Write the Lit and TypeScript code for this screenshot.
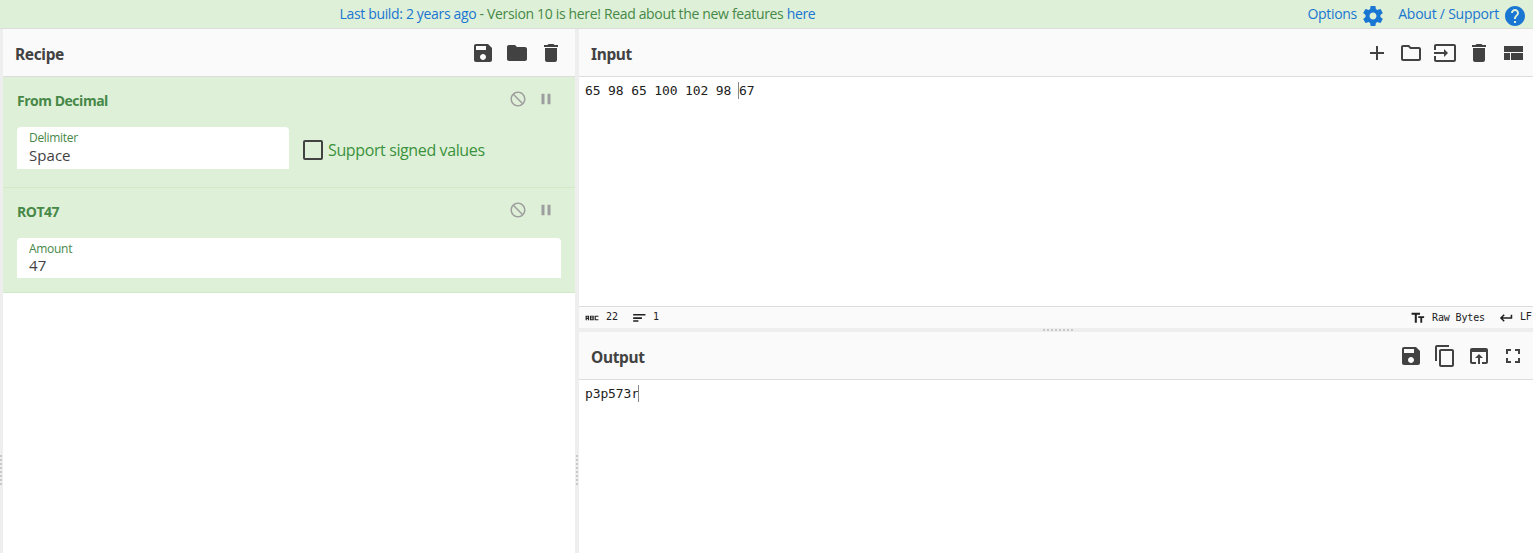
import { LitElement, html, css, svg } from "lit";
import { customElement, property } from "lit/decorators.js";

const ICONS: Record<string, string> = {
  save: "M17 3H5c-1.11 0-2 .9-2 2v14c0 1.1.89 2 2 2h14c1.1 0 2-.9 2-2V7l-4-4zm-5 16c-1.66 0-3-1.34-3-3s1.34-3 3-3 3 1.34 3 3-1.34 3-3 3zm3-10H5V5h10v4z",
  folder: "M10 4H4c-1.1 0-1.99.9-1.99 2L2 18c0 1.1.9 2 2 2h16c1.1 0 2-.9 2-2V8c0-1.1-.9-2-2-2h-8l-2-2z",
  trash: "M6 19c0 1.1.9 2 2 2h8c1.1 0 2-.9 2-2V7H6v12zM19 4h-3.5l-1-1h-5l-1 1H5v2h14V4z",
  add: "M19 13h-6v6h-2v-6H5v-2h6V5h2v6h6v2z",
  folderOpen: "M9.17 6l2 2H20v10H4V6h5.17M10 4H4c-1.1 0-1.99.9-1.99 2L2 18c0 1.1.9 2 2 2h16c1.1 0 2-.9 2-2V8c0-1.1-.9-2-2-2h-8l-2-2z",
  input: "M21 3.01H3c-1.1 0-2 .9-2 2V9h2V4.99h18v14.03H3V15H1v4.01c0 1.1.9 1.98 2 1.98h18c1.1 0 2-.88 2-1.98v-14c0-1.11-.9-2-2-2zM11 16l4-4-4-4v3H1v2h10v3z",
  layout: "M3 19h6v-7H3v7zm7 0h12v-7H10v7zM3 5v6h19V5H3z",
  copy: "M16 1H4c-1.1 0-2 .9-2 2v14h2V3h12V1zm3 4H8c-1.1 0-2 .9-2 2v14c0 1.1.9 2 2 2h11c1.1 0 2-.9 2-2V7c0-1.1-.9-2-2-2zm0 16H8V7h11v14z",
  openIn: "M19 4H5c-1.11 0-2 .9-2 2v12c0 1.1.89 2 2 2h4v-2H5V8h14v10h-4v2h4c1.1 0 2-.9 2-2V6c0-1.1-.89-2-2-2zm-7 6l-4 4h3v6h2v-6h3l-4-4z",
  fullscreen: "M7 14H5v5h5v-2H7v-3zm-2-4h2V7h3V5H5v5zm12 7h-3v2h5v-5h-2v3zM14 5v2h3v3h2V5h-5z",
  block: "M12 2c5.520 0 10 4.480 10 10s-4.480 10-10 10S2 17.520 2 12 6.480 2 12 2zM20 12c0-4.420-3.580-8-8-8-1.850 0-3.550.630-4.900 1.690L18.310 16.900C19.370 15.550 20 13.850 20 12zM12 20c1.850 0 3.550-.630 4.900-1.690L5.690 7.100C4.630 8.450 4 10.150 4 12c0 4.420 3.580 8 8 8z",
  pause: "M6 19h4V5H6v14zm8-14v14h4V5h-4z",
  settings: "M19.43 12.98c.04-.32.07-.64.07-.98s-.03-.66-.07-.98l2.11-1.65c.19-.15.24-.42.12-.64l-2-3.46c-.12-.22-.39-.3-.61-.22l-2.49 1c-.52-.4-1.08-.73-1.69-.98l-.38-2.65C14.46 2.18 14.25 2 14 2h-4c-.25 0-.46.18-.49.42l-.38 2.65c-.61.25-1.17.59-1.69.98l-2.49-1c-.23-.09-.49 0-.61.22l-2 3.46c-.13.22-.07.49.12.64l2.11 1.65c-.04.32-.07.65-.07.98s.03.66.07.98l-2.11 1.65c-.19.15-.24.42-.12.64l2 3.46c.12.22.39.3.61.22l2.49-1c.52.4 1.08.73 1.69.98l.38 2.65c.03.24.24.42.49.42h4c.25 0 .46-.18.49-.42l.38-2.65c.61-.25 1.17-.59 1.69-.98l2.49 1c.23.09.49 0 .61-.22l2-3.46c.12-.22.07-.49-.12-.64l-2.11-1.65zM12 15.5c-1.93 0-3.5-1.57-3.5-3.5s1.57-3.5 3.5-3.5 3.5 1.57 3.5 3.5-1.57 3.5-3.5 3.5z",
  help: "M12 2C6.48 2 2 6.48 2 12s4.48 10 10 10 10-4.48 10-10S17.52 2 12 2zm1 17h-2v-2h2v2zm2.07-7.75l-.9.92C13.45 12.9 13 13.5 13 15h-2v-.5c0-1.1.45-2.1 1.17-2.83l1.24-1.26c.37-.36.59-.86.59-1.41 0-1.1-.9-2-2-2s-2 .9-2 2H8c0-2.21 1.79-4 4-4s4 1.79 4 4c0 .88-.36 1.68-.93 2.25z",
  abc: "M1 8h6v8H5v-2.500H3V16H1zm2 1.700v2h2v-2zM8.500 8h6.500v8H8.500zm2 1.500v1.500h2.500v-1.500zm0 3v1.700h2.500v-1.700zM16.500 8H23v2h-4.500v4H23v2h-6.500z",
  lines: "M2 18.500h9v-2.500H2v2.500zM2 5v2.500h21V5H2zm0 8.500h15v-3H2v3z",
  textSize: "M1 3v3.500h5.500V20h3.500V6.500h5.500V3H1zm21.500 6h-10v3.200h3.500V20h3.200v-7.800h3.300V9z",
  enter: "M20 6.500v4.200H6.500l3.300-3.300L8 5.500l-6.500 6.500L8 18.500l1.800-1.900-3.300-3.300H22.700V6.500z",
};

@customElement("mat-icon")
class MatIcon extends LitElement {
  @property() name = "";
  @property({ type: Number }) size = 24;
  static styles = css`
    :host { display: block; flex: none; }
    svg { display: block; fill: currentColor; }
  `;
  render() {
    return html`<svg width=${this.size} height=${this.size} viewBox="0 0 24 24">${svg`<path d=${ICONS[this.name]}></path>`}</svg>`;
  }
}

@customElement("pane-title")
class PaneTitle extends LitElement {
  @property() label = "";
  @property({ type: Array }) icons: string[] = [];
  static styles = css`
    :host {
      display: flex; justify-content: space-between; height: 47px; flex: none;
      padding-left: 12px; padding-right: 8px; background: #fafafa; border-bottom: 1px solid #ddd; color: #424242;
    }
    :host([inset]) { padding-right: 12px; }
    .label { font: 700 15.500px/20px "Noto Sans", "Open Sans", sans-serif; letter-spacing: -0.35px; padding-top: 15px; }
    .icons { display: flex; gap: 10px; padding-top: 12px; }
  `;
  render() {
    return html`<span class="label">${this.label}</span>
      <div class="icons">${this.icons.map((i) => html`<mat-icon name=${i}></mat-icon>`)}</div>`;
  }
}

@customElement("recipe-op")
class RecipeOp extends LitElement {
  @property() name = "";
  static styles = css`
    :host { display: block; background: #dff0d8; border-bottom: 1px solid #d0e9c6; padding: 0 14px; }
    .head { display: flex; height: 50px; justify-content: space-between; color: #468847; }
    .name { font: 700 14px/20px "Open Sans", "Noto Sans", sans-serif; letter-spacing: -0.48px; padding-top: 14px; }
    .ctl { display: flex; gap: 10px; padding: 13px 6px 0 0; color: #9e9e9e; }
    .args { display: flex; }
  `;
  render() {
    return html`<div class="head">
        <span class="name">${this.name}</span>
        <div class="ctl"><mat-icon name="block" size="18"></mat-icon><mat-icon name="pause" size="18"></mat-icon></div>
      </div>
      <div class="args"><slot></slot></div>`;
  }
}

@customElement("split-handle")
class SplitHandle extends LitElement {
  static styles = css`
    :host { display: flex; flex-direction: column; align-items: center; gap: 2px; width: 4px; background: #eee; padding-top: 426px; box-sizing: border-box; }
    :host([row]) { flex-direction: row; justify-content: center; width: auto; height: 4px; flex: none; padding: 0 0 0 3px; }
    :host([edge]) { width: 3px; align-items: flex-start; }
    i { width: 2px; height: 2px; background: #c8c8c8; flex: none; }
  `;
  render() {
    return html`${Array.from({ length: 8 }, () => html`<i></i>`)}`;
  }
}

@customElement("app-root")
class AppRoot extends LitElement {
  static styles = css`
    :host {
      display: flex; flex-direction: column; width: 1533px; height: 553px; overflow: hidden; background: #fff;
      font-family: "Open Sans", "Noto Sans", sans-serif; color: #424242;
    }
    .banner { display: grid; grid-template-columns: 339.500px 1fr auto; height: 28px; flex: none; background: #dff0d8; border-bottom: 1px solid #ddd; color: #468847; font-size: 14px; line-height: 28px; white-space: nowrap; }
    .notice { grid-column: 2; letter-spacing: -0.34px; }
    a { color: #1976d2; }
    .links { display: flex; padding-right: 6px; letter-spacing: -0.3px; }
    .links mat-icon { color: #1976d2; padding-top: 4px; }
    .links .options { padding-right: 4px; }
    .links .about { padding: 0 4px 0 13.300px; letter-spacing: -0.24px; }
    .work { display: flex; flex: 1; min-height: 0; }
    .recipe { width: 572px; }
    .io { flex: 1; display: flex; flex-direction: column; min-width: 0; }
    .field { background: #fff; border-radius: 4px 4px 0 0; padding: 0 12px; box-sizing: border-box; white-space: nowrap; }
    .select { width: 272px; height: 42px; margin-bottom: 18px; }
    .number { width: 544px; height: 40px; margin-bottom: 14px; }
    .field label { display: block; font-size: 12px; line-height: 14px; padding-top: 4px; color: #468847; letter-spacing: -0.3px; }
    .field span { display: block; font-size: 15px; line-height: 21px; letter-spacing: 0.05px; }
    .field.number span { line-height: 19px; }
    .check { display: flex; padding: 13px 0 0 14px; gap: 5px; color: #3a923c; font-size: 16px; line-height: 21px; letter-spacing: -0.38px; }
    .box { width: 16px; height: 16px; border: 2px solid #424242; border-radius: 2px; }
    .editor { font: 13px/18px "DejaVu Sans Mono", monospace; letter-spacing: -0.13px; color: #212121; padding: 5px 6px; white-space: pre; }
    .editor.in { height: 219px; flex: none; }
    .caret { display: inline-block; width: 1px; height: 17px; margin: 0 0 0 -1px; background: #888; vertical-align: -4px; }
    .status { display: flex; height: 21px; flex: none; background: #fafafa; border-top: 1px solid #ddd; font: 10px/20px "DejaVu Sans Mono", monospace; letter-spacing: -0.02px; color: #212121; padding-left: 6px; white-space: nowrap; overflow: hidden; }
    .status mat-icon { padding-top: 4px; }
    .n22 { padding: 0 14px 0 7px; }
    .n1 { padding-left: 7px; flex: 1; }
    .raw { padding: 0 14px 0 7px; letter-spacing: -0.14px; line-height: 22px; }
    .lf { padding-left: 7px; width: 13px; letter-spacing: -0.2px; }
  `;
  render() {
    return html`
      <div class="banner">
        <div class="notice"><a>Last build: 2 years ago</a> - Version 10 is here! Read about the new features <a>here</a></div>
        <div class="links">
          <a class="options">Options</a><mat-icon name="settings"></mat-icon>
          <a class="about">About / Support</a><mat-icon name="help"></mat-icon>
        </div>
      </div>
      <div class="work">
        <split-handle edge></split-handle>
        <div class="recipe">
          <pane-title inset label="Recipe" .icons=${["save", "folder", "trash"]}></pane-title>
          <recipe-op name="From Decimal">
            <div class="field select"><label>Delimiter</label><span>Space</span></div>
            <div class="check"><div class="box"></div>Support signed values</div>
          </recipe-op>
          <recipe-op name="ROT47">
            <div class="field number"><label>Amount</label><span>47</span></div>
          </recipe-op>
        </div>
        <split-handle></split-handle>
        <div class="io">
          <pane-title label="Input" .icons=${["add", "folderOpen", "input", "trash", "layout"]}></pane-title>
          <div class="editor in">65 98 65 100 102 98 <i class="caret"></i>67</div>
          <div class="status">
            <mat-icon name="abc" size="14"></mat-icon><span class="n22">22</span>
            <mat-icon name="lines" size="14"></mat-icon><span class="n1">1</span>
            <mat-icon name="textSize" size="14"></mat-icon><span class="raw">Raw Bytes</span>
            <mat-icon name="enter" size="14"></mat-icon><span class="lf">LF</span>
          </div>
          <split-handle row></split-handle>
          <pane-title label="Output" .icons=${["save", "copy", "openIn", "fullscreen"]}></pane-title>
          <div class="editor">p3p573r<i class="caret"></i></div>
        </div>
      </div>`;
  }
}
